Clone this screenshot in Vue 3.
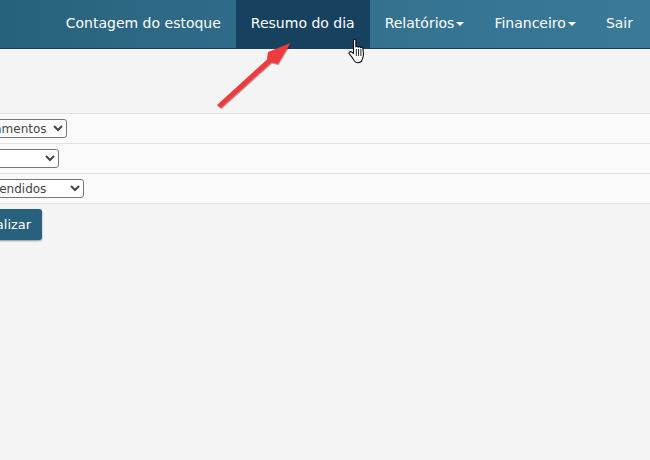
<script setup>
const items = [
  { label: 'Contagem do estoque' },
  { label: 'Resumo do dia', active: true },
  { label: 'Relatórios', caret: true },
  { label: 'Financeiro', caret: true },
  { label: 'Sair' },
]
const filters = [
  { option: 'Lançamentos', cls: 'sel-a' },
  { option: '', cls: 'sel-b' },
  { option: 'Mais vendidos', cls: 'sel-c' },
]
</script>

<template>
  <div class="page">
    <nav class="navbar">
      <a v-for="item in items" :key="item.label" class="nav-item" :class="{ active: item.active }">
        {{ item.label }}<span v-if="item.caret" class="caret"></span>
      </a>
    </nav>
    <main class="content">
      <div v-for="f in filters" :key="f.cls" class="row">
        <select class="sel" :class="f.cls"><option>{{ f.option }}</option></select>
      </div>
      <button class="btn">Atualizar</button>
    </main>

    <svg class="arrow" width="90" height="80" viewBox="0 0 90 80">
      <defs>
        <filter id="sh" x="-20%" y="-20%" width="140%" height="140%">
          <feDropShadow dx="0.5" dy="1" stdDeviation="0.6" flood-color="#000" flood-opacity="0.4" />
        </filter>
      </defs>
      <path filter="url(#sh)" fill="#ee3b3f" d="M9 64 L59 18.5 L60 11 L82.5 2 L70 23 L63.5 21.5 L13 67 Z" />
    </svg>

    <svg class="hand" width="20" height="26" viewBox="0 0 20 26">
      <path d="M5.5 2.2 C5.5 0.8 7.8 0.8 7.8 2.2 L7.8 9 C8 8 10 8 10.2 9.3 C10.5 8.3 12.4 8.4 12.6 9.7 C13 9 14.8 9.2 14.9 10.6 L15.5 16 C15.5 19 14.6 21 13.5 23.5 C11 25 8 25 6.5 23 C5 20.5 3.2 18 1.2 15.6 C0.5 14.4 2.2 13 3.6 14 L5.5 15.6 Z" fill="#fff" stroke="#111" stroke-width="1.1" stroke-linejoin="round" />
      <path d="M8.3 11 V18 M10.6 11 V18 M12.9 11 V18" stroke="#111" stroke-width="0.9" fill="none" />
    </svg>
  </div>
</template>

<style>
html, body { margin: 0; padding: 0; }
</style>

<style scoped>
.page {
  position: relative;
  width: 650px;
  height: 460px;
  overflow: hidden;
  background: #f4f4f4;
  font-family: "DejaVu Sans", Verdana, sans-serif;
}
.navbar {
  display: flex;
  justify-content: flex-end;
  height: 48px;
  padding-right: 2px;
  border-bottom: 1px solid #153f5c;
  background: linear-gradient(90deg, #27617d 0%, #33708e 50%, #397a99 100%);
}
.nav-item {
  display: flex;
  align-items: center;
  padding: 0 15px 2px;
  color: #fff;
  font-size: 14px;
  white-space: nowrap;
}
.nav-item.active {
  background: #164260;
}
.caret {
  width: 0;
  height: 0;
  margin: 2px 0 0 2px;
  border-top: 4px solid #fff;
  border-left: 4px solid transparent;
  border-right: 4px solid transparent;
}
.content {
  padding-top: 64px;
}
.row {
  display: flex;
  align-items: center;
  height: 29px;
  background: #fafafa;
  border-top: 1px solid #e2e2e2;
}
.row:last-of-type {
  border-bottom: 1px solid #e2e2e2;
}
.sel {
  height: 19px;
  padding: 0;
  box-sizing: border-box;
  background: #fff;
  border: 1px solid #767676;
  border-radius: 3px;
  color: #444;
  font-family: "DejaVu Sans", Verdana, sans-serif;
  font-size: 12px;
}
.sel-a { width: 106px; margin-left: -39px; }
.sel-b { width: 120px; margin-left: -61px; }
.sel-c { width: 128px; margin-left: -44px; }
.btn {
  display: block;
  width: 84px;
  height: 31px;
  margin: 5px 0 0 -42px;
  padding: 0 0 0 5px;
  background: #27617d;
  border: 0;
  border-radius: 3px;
  box-shadow: 0 1px 2px rgba(0, 0, 0, 0.4);
  color: #fff;
  font-family: "DejaVu Sans", Verdana, sans-serif;
  font-size: 13px;
}
.arrow {
  position: absolute;
  left: 208px;
  top: 41px;
}
.hand {
  position: absolute;
  left: 348px;
  top: 38px;
}
</style>
